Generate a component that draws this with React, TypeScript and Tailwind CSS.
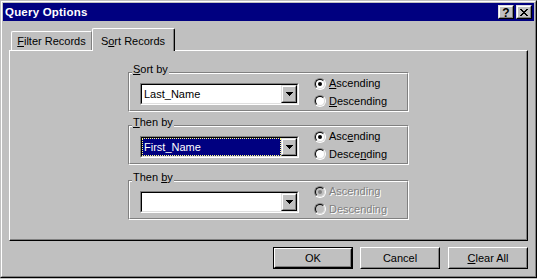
import type { ReactNode } from "react";

const font = { fontFamily: '"Liberation Sans", Arial, sans-serif' };

function Radio({ checked, disabled }: { checked?: boolean; disabled?: boolean }) {
    return (
        <span className="block w-[12px] h-[12px] rounded-full border border-t-[#808080] border-l-[#808080] border-b-white border-r-white">
            <span
                className={`flex items-center justify-center w-full h-full rounded-full border border-t-black border-l-black border-b-[#dfdfdf] border-r-[#dfdfdf] ${disabled ? "bg-[#c0c0c0]" : "bg-white"}`}
            >
                {checked && <span className={`block w-[4px] h-[4px] rounded-full ${disabled ? "bg-[#808080]" : "bg-black"}`} />}
            </span>
        </span>
    );
}

function RadioRow({ checked, disabled, children }: { checked?: boolean; disabled?: boolean; children: ReactNode }) {
    return (
        <div className="flex items-center h-[18px] gap-[3px]">
            <Radio checked={checked} disabled={disabled} />
            <span className={`leading-[13px] ${disabled ? "text-[#808080] [text-shadow:1px_1px_0_#ffffff]" : "text-black"}`}>
                {children}
            </span>
        </div>
    );
}

function DropButton() {
    return (
        <div className="w-[16px] h-full border border-t-[#dfdfdf] border-l-[#dfdfdf] border-b-black border-r-black">
            <div className="flex items-center justify-center w-full h-full bg-[#c0c0c0] border border-t-white border-l-white border-b-[#808080] border-r-[#808080]">
                <svg width="7" height="4" viewBox="0 0 7 4" shapeRendering="crispEdges">
                    <path d="M0 0h7v1H0zM1 1h5v1H1zM2 2h3v1H2zM3 3h1v1H3z" fill="#000" />
                </svg>
            </div>
        </div>
    );
}

function Combo({ value, focused }: { value?: string; focused?: boolean }) {
    return (
        <div className="w-[159px] h-[22px] border border-t-[#808080] border-l-[#808080] border-b-white border-r-white">
            <div className="flex h-full bg-white border border-t-black border-l-black border-b-[#dfdfdf] border-r-[#dfdfdf]">
                <div
                    className={`flex-1 flex items-center pl-[2px] leading-[13px] ${focused ? "bg-[#000080] text-white outline outline-1 outline-dotted outline-[#ffff80] -outline-offset-1" : "text-black"}`}
                >
                    {value}
                </div>
                <DropButton />
            </div>
        </div>
    );
}

function Group({ label, children }: { label: ReactNode; children: ReactNode }) {
    return (
        <div className="relative w-[281px] h-[40px] border border-t-[#808080] border-l-[#808080] border-b-white border-r-white">
            <div className="flex h-full pl-[10px] border border-t-white border-l-white border-b-[#808080] border-r-[#808080]">
                {children}
            </div>
            <span className="absolute left-[3px] -top-[10px] px-[1px] bg-[#c0c0c0] leading-[13px]">{label}</span>
        </div>
    );
}

function SortGroup({
    label,
    value,
    focused,
    disabled,
    asc,
    desc,
}: {
    label: ReactNode;
    value?: string;
    focused?: boolean;
    disabled?: boolean;
    asc: ReactNode;
    desc: ReactNode;
}) {
    return (
        <Group label={label}>
            <div className="mt-[9px]">
                <Combo value={value} focused={focused} />
            </div>
            <div className="ml-[15px] mt-[1px] flex flex-col">
                <RadioRow checked disabled={disabled}>{asc}</RadioRow>
                <RadioRow disabled={disabled}>{desc}</RadioRow>
            </div>
        </Group>
    );
}

function PushButton({ children, isDefault }: { children: ReactNode; isDefault?: boolean }) {
    const face = (
        <div className="w-full h-full border border-t-white border-l-white border-b-black border-r-black">
            <div className="flex items-center justify-center w-full h-full bg-[#c0c0c0] border border-t-[#c0c0c0] border-l-[#c0c0c0] border-b-[#808080] border-r-[#808080] leading-[13px]">
                {children}
            </div>
        </div>
    );
    return (
        <div className={`w-[80px] h-[22px] ${isDefault ? "border border-black" : ""}`}>{face}</div>
    );
}

function CaptionButton({ children }: { children: ReactNode }) {
    return (
        <div className="w-[16px] h-[14px] border border-t-[#dfdfdf] border-l-[#dfdfdf] border-b-black border-r-black">
            <div className="flex items-center justify-center w-full h-full bg-[#c0c0c0] border border-t-white border-l-white border-b-[#808080] border-r-[#808080]">
                {children}
            </div>
        </div>
    );
}

export default function App() {
    return (
        <div className="w-[537px] h-[279px] bg-[#c0c0c0] text-[11px] text-black" style={font}>
            <div className="w-[537px] h-[278px] border border-t-[#c0c0c0] border-l-[#c0c0c0] border-b-black border-r-black">
                <div className="flex flex-col h-full p-[1px] border border-t-white border-l-white border-b-[#808080] border-r-[#808080]">
                    {/* title bar */}
                    <div className="flex items-center justify-between h-[18px] px-[2px] bg-[#000080]">
                        <span className="text-white font-bold text-[11.5px] leading-[14px] tracking-[0.2px]">Query Options</span>
                        <div className="flex gap-[2px]">
                            <CaptionButton>
                                <span className="font-bold text-[12px] leading-[10px] mt-[1px]">?</span>
                            </CaptionButton>
                            <CaptionButton>
                                <svg width="8" height="7" viewBox="0 0 8 7" shapeRendering="crispEdges">
                                    <path
                                        d="M0 0h2v1H0zM6 0h2v1H6zM1 1h2v1H1zM5 1h2v1H5zM2 2h4v1H2zM3 3h2v1H3zM2 4h4v1H2zM1 5h2v1H1zM5 5h2v1H5zM0 6h2v1H0zM6 6h2v1H6z"
                                        fill="#000"
                                    />
                                </svg>
                            </CaptionButton>
                        </div>
                    </div>

                    {/* tabs */}
                    <div className="flex items-end h-[22px] mt-[7px] ml-[8px]">
                        <div className="w-[81px] h-[19px] border-l border-t border-l-white border-t-white border-r border-r-[#808080] rounded-tl-[2px] flex justify-center pt-[3px] leading-[13px]">
                            <span>
                                <span className="underline">F</span>ilter Records
                            </span>
                        </div>
                        <div className="relative z-10 w-[83px] h-[23px] -mb-[1px] bg-[#c0c0c0] border-l border-t border-l-white border-t-white border-r border-r-black rounded-tl-[2px] rounded-tr-[2px]">
                            <div className="h-full border-r border-r-[#808080] flex justify-center pt-[6px] leading-[13px]">
                                <span>
                                    S<span className="underline">o</span>rt Records
                                </span>
                            </div>
                        </div>
                    </div>

                    {/* panel */}
                    <div className="ml-[6px] w-[519px] h-[191px] border border-t-white border-l-white border-b-black border-r-black">
                        <div className="flex flex-col h-full pt-[21px] pl-[118px] border-b border-r border-b-[#808080] border-r-[#808080]">
                            <SortGroup
                                label={<><span className="underline">S</span>ort by</>}
                                value="Last_Name"
                                asc={<><span className="underline">A</span>scending</>}
                                desc={<><span className="underline">D</span>escending</>}
                            />
                            <div className="mt-[13px]">
                                <SortGroup
                                    label={<><span className="underline">T</span>hen by</>}
                                    value="First_Name"
                                    focused
                                    asc={<>Asc<span className="underline">e</span>nding</>}
                                    desc={<>Desce<span className="underline">n</span>ding</>}
                                />
                            </div>
                            <div className="mt-[15px]">
                                <SortGroup
                                    label={<>Then <span className="underline">b</span>y</>}
                                    disabled
                                    asc="Ascending"
                                    desc="Descending"
                                />
                            </div>
                        </div>
                    </div>

                    {/* buttons */}
                    <div className="flex justify-end mt-[6px] pr-[6px]">
                        <PushButton isDefault>OK</PushButton>
                        <div className="ml-[7px]">
                            <PushButton>Cancel</PushButton>
                        </div>
                        <div className="ml-[8px]">
                            <PushButton>
                                <span>
                                    <span className="underline">C</span>lear All
                                </span>
                            </PushButton>
                        </div>
                    </div>
                </div>
            </div>
        </div>
    );
}
